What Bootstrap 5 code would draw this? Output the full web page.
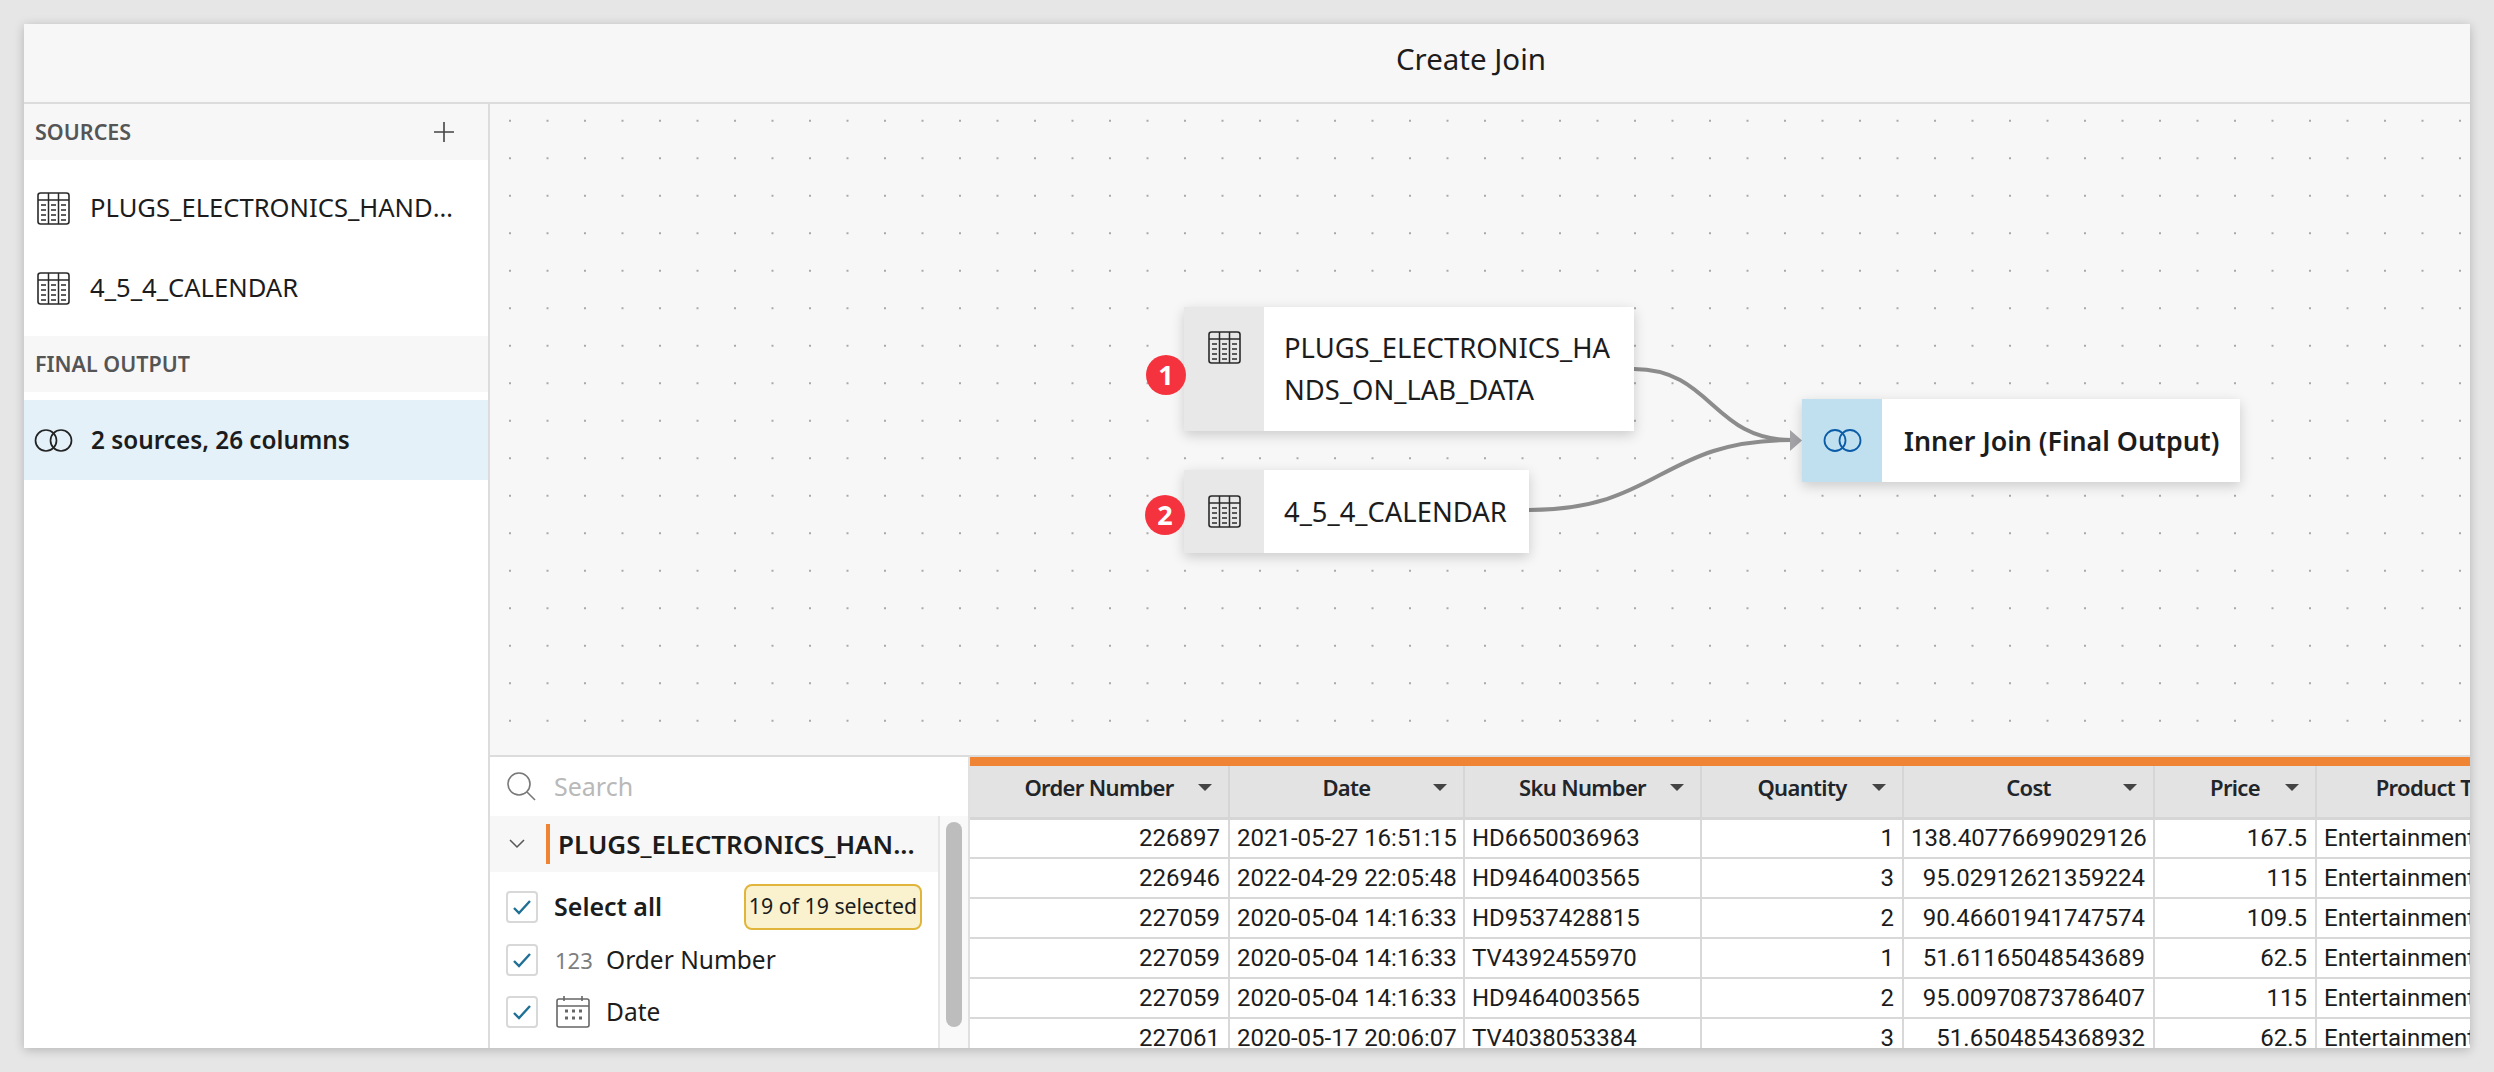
<!DOCTYPE html>
<html lang="en">
<head>
  <meta charset="UTF-8" />
  <title>Create Join</title>
  <link href="https://cdn.jsdelivr.net/npm/bootstrap@5.3.0/dist/css/bootstrap.min.css" rel="stylesheet" />
  <style>
    /* page + main panel */
    html, body { height: 100%; }
    body {
      background-color: #e6e6e6;
      color: #1c1c1c;
      font-family: "Noto Sans", sans-serif;
      font-size: 25px;
      padding: 24px 24px 0 24px;
      overflow: hidden;
    }
    .join-panel {
      width: 2446px;
      height: 1024px;
      background: #fff;
      box-shadow: 0 2px 10px rgba(0, 0, 0, .22);
      overflow: hidden;
    }
    .join-head {
      height: 80px;
      flex: none;
      background: #f7f7f7;
      border-bottom: 2px solid #dcdcdc;
      padding: 0 0 8px 448px;
      font-size: 29.5px;
    }
    .join-body { height: 944px; }

    /* left sidebar */
    .src-side { width: 466px; flex: none; border-right: 2px solid #dcdcdc; }
    .side-title {
      height: 56px;
      background: #f7f7f7;
      padding: 0 34px 0 11px;
      font-size: 21.5px;
      font-weight: 600;
      color: #555;
    }
    .side-list { padding: 8px 0; }
    .side-item { height: 80px; padding: 0 33px 0 13px; gap: 20px; white-space: nowrap; font-size: 25.6px; }
    .side-item.is-on { background: #e4f1f8; font-size: 24.3px; font-weight: 600; padding-left: 10px; gap: 18px; }
    .side-name { overflow: hidden; text-overflow: ellipsis; }
    .ico-table { width: 33px; height: 33px; flex: none; }
    .ico-join { width: 39px; height: 23px; flex: none; }

    /* canvas with the diagram */
    .join-main { width: 1980px; }
    .join-canvas {
      height: 651px;
      flex: none;
      position: relative;
      background-color: #f7f7f7;
      background-image: radial-gradient(circle, #a8a8a8 1px, transparent 1.4px);
      background-size: 37.5px 37.5px;
      background-position: 1.25px -2px;
    }
    .flow-lines { position: absolute; left: 0; top: 0; }
    .flow-node {
      position: absolute;
      display: flex;
      background: #fff;
      box-shadow: 0 4px 12px rgba(0, 0, 0, .18);
    }
    .node-ico { width: 80px; flex: none; background: #e8e8e8; display: flex; justify-content: center; }
    .node-ico.is-out { background: #c0e0ef; align-items: center; }
    .node-ico.is-mid { align-items: center; }
    .node-txt { padding: 0 10px 0 20px; line-height: 42px; align-self: center; font-size: 27.4px; white-space: nowrap; }
    .node-a { left: 694px; top: 203px; width: 450px; height: 124px; }
    .node-a .node-ico { padding-top: 24px; }
    .node-b { left: 694px; top: 366px; width: 345px; height: 83px; }
    .node-c { left: 1312px; top: 295px; width: 438px; height: 83px; }
    .node-c .node-txt { padding-left: 22px; font-size: 26.8px; font-weight: 600; }
    .step-dot {
      position: absolute;
      width: 40px;
      height: 40px;
      border-radius: 50%;
      background: #f5333f;
      color: #fff;
      font-weight: 700;
      font-size: 27px;
      line-height: 40px;
      text-align: center;
    }
    .dot-a { left: 656px; top: 251px; }
    .dot-b { left: 655px; top: 391px; }

    /* bottom: field picker + preview */
    .join-bottom { height: 293px; flex: none; border-top: 2px solid #dcdcdc; overflow: hidden; }
    .field-pick { width: 480px; flex: none; border-right: 2px solid #e0e0e0; }
    .field-search { height: 59px; padding-left: 17px; gap: 18px; color: #b9b9b9; }
    .field-box { height: 232px; overflow: hidden; }
    .field-scroll { flex: 1 1 auto; min-width: 0; }
    .field-track { width: 30px; flex: none; background: #f9f9f9; border-left: 2px solid #e6e6e6; padding: 6px 0 0 6px; }
    .field-thumb { width: 16px; height: 205px; border-radius: 8px; background: #bdbdbd; }
    .field-src { height: 56px; background: #f7f7f7; padding-left: 19px; white-space: nowrap; font-weight: 600; font-size: 26px; }
    .src-bar { width: 4px; height: 40px; background: #ef8434; margin: 0 8px 0 21px; flex: none; }
    .field-row { padding-left: 16px; height: 52px; white-space: nowrap; font-size: 24.5px; }
    .field-row.is-first { margin-top: 8px; height: 54px; font-size: 25px; }
    .tick-box {
      width: 32px;
      height: 32px;
      flex: none;
      border: 2px solid #d8d8d8;
      border-radius: 4px;
      margin-right: 16px;
      display: flex;
      align-items: center;
      justify-content: center;
    }
    .type-num { width: 52px; padding-left: 1px; color: #7d7d7d; font-size: 22px; }
    .type-cal { width: 52px; padding-left: 2px; display: flex; }
    .sel-pill {
      margin-left: auto;
      margin-right: 16px;
      height: 46px;
      width: 178px;
      border: 2px solid #e0b53a;
      border-radius: 8px;
      background: #faf2cf;
      font-size: 21.3px;
      text-align: center;
      line-height: 40px;
    }

    .data-wrap { flex: 1 1 auto; min-width: 0; overflow: hidden; border-top: 9px solid #ef8434; }
    .data-grid { width: 1598px; max-width: none; table-layout: fixed; margin: 0; font-family: Roboto, sans-serif; font-size: 24px; }
    .data-grid th {
      height: 52px;
      padding: 0 0 8px 0;
      position: relative;
      background: #e3e3e3;
      font-family: "Noto Sans", sans-serif;
      font-size: 22px;
      font-weight: 600;
      letter-spacing: -0.03em;
      text-align: center;
      vertical-align: middle;
      border-right: 2px solid #d6d6d6;
      border-bottom: 3px solid #d6d6d6;
    }
    .data-grid th::after {
      content: "";
      position: absolute;
      right: 16px;
      top: 18px;
      border-left: 7px solid transparent;
      border-right: 7px solid transparent;
      border-top: 7px solid #444;
    }
    .data-grid td {
      height: 40px;
      padding: 0 8px 0 7px;
      white-space: nowrap;
      border-right: 2px solid #d8d8d8;
      border-bottom: 2px solid #d8d8d8;
      vertical-align: middle;
      color: #1c1c1c;
    }
  </style>
</head>
<body>
  <!-- shared icons -->
  <svg width="0" height="0" class="position-absolute">
    <symbol id="i-table" viewBox="0 0 33 33">
      <rect x="1" y="1" width="31" height="31" rx="2.5" fill="none" stroke="#2a2a2a" stroke-width="1.6" />
      <path d="M1 8h31M11.5 1v31M21.5 1v31" fill="none" stroke="#2a2a2a" stroke-width="1.5" />
      <path d="M4 13h5M14 13h5M24 13h5M4 18h5M14 18h5M24 18h5M4 23h5M14 23h5M24 23h5M4 28h5M14 28h5M24 28h5" fill="none" stroke="#2a2a2a" stroke-width="1.5" />
    </symbol>
    <symbol id="i-tick" viewBox="0 0 20 16">
      <path d="M2 9l5 5L18 2" fill="none" stroke="#1f6f96" stroke-width="2.4" />
    </symbol>
  </svg>

  <div class="join-panel d-flex flex-column">
    <div class="join-head d-flex align-items-center justify-content-center">Create Join</div>

    <div class="join-body d-flex">
      <!-- Sources -->
      <div class="src-side">
        <div class="side-title d-flex align-items-center justify-content-between">
          <span>SOURCES</span>
          <svg width="20" height="20" viewBox="0 0 20 20"><path d="M10 0v20M0 10h20" stroke="#444" stroke-width="1.6" /></svg>
        </div>
        <div class="side-list">
          <div class="side-item d-flex align-items-center">
            <svg class="ico-table"><use href="#i-table" /></svg>
            <span class="side-name">PLUGS_ELECTRONICS_HANDS_ON_LAB_DATA</span>
          </div>
          <div class="side-item d-flex align-items-center">
            <svg class="ico-table"><use href="#i-table" /></svg>
            <span class="side-name">4_5_4_CALENDAR</span>
          </div>
        </div>
        <div class="side-title d-flex align-items-center">FINAL OUTPUT</div>
        <div class="side-list">
          <div class="side-item is-on d-flex align-items-center">
            <svg class="ico-join" viewBox="0 0 39 23"><circle cx="12" cy="11.5" r="10.5" fill="none" stroke="#222" stroke-width="1.7" /><circle cx="27" cy="11.5" r="10.5" fill="none" stroke="#222" stroke-width="1.7" /></svg>
            <span>2 sources, 26 columns</span>
          </div>
        </div>
      </div>

      <div class="join-main d-flex flex-column">
        <!-- Diagram -->
        <div class="join-canvas">
          <svg class="flow-lines" width="1980" height="651">
            <path d="M1144 265C1222 265 1222 336 1302 336" fill="none" stroke="#8c8c8c" stroke-width="4" />
            <path d="M1039 406C1170 406 1170 336 1302 336" fill="none" stroke="#8c8c8c" stroke-width="4" />
            <path d="M1300 326l12 10.500l-12 10.500z" fill="#a3a3a8" />
          </svg>
          <div class="flow-node node-a">
            <div class="node-ico"><svg class="ico-table"><use href="#i-table" /></svg></div>
            <div class="node-txt">PLUGS_ELECTRONICS_HA<br />NDS_ON_LAB_DATA</div>
          </div>
          <div class="flow-node node-b">
            <div class="node-ico is-mid"><svg class="ico-table"><use href="#i-table" /></svg></div>
            <div class="node-txt">4_5_4_CALENDAR</div>
          </div>
          <div class="flow-node node-c">
            <div class="node-ico is-out"><svg class="ico-join" viewBox="0 0 39 23"><circle cx="12" cy="11.5" r="10.500" fill="none" stroke="#0a5ca8" stroke-width="1.8" /><circle cx="27" cy="11.5" r="10.500" fill="none" stroke="#0a5ca8" stroke-width="1.8" /></svg></div>
            <div class="node-txt">Inner Join (Final Output)</div>
          </div>
          <div class="step-dot dot-a">1</div>
          <div class="step-dot dot-b">2</div>
        </div>

        <!-- Fields and preview -->
        <div class="join-bottom d-flex">
          <div class="field-pick">
            <div class="field-search d-flex align-items-center">
              <svg width="29" height="29" viewBox="0 0 29 29"><circle cx="12" cy="12" r="11" fill="none" stroke="#777" stroke-width="1.6" /><path d="M20 20l8 8" stroke="#777" stroke-width="1.6" /></svg>
              <span>Search</span>
            </div>
            <div class="field-box d-flex">
              <div class="field-scroll">
                <div class="field-src d-flex align-items-center">
                  <svg width="16" height="10" viewBox="0 0 16 10"><path d="M1 1l7 7 7-7" fill="none" stroke="#555" stroke-width="1.5" /></svg>
                  <span class="src-bar"></span>
                  <span>PLUGS_ELECTRONICS_HAN...</span>
                </div>
                <div class="field-row is-first d-flex align-items-center">
                  <span class="tick-box"><svg width="20" height="16"><use href="#i-tick" /></svg></span>
                  <b class="fw-semibold">Select all</b>
                  <span class="sel-pill">19 of 19 selected</span>
                </div>
                <div class="field-row d-flex align-items-center">
                  <span class="tick-box"><svg width="20" height="16"><use href="#i-tick" /></svg></span>
                  <span class="type-num">123</span>
                  <span>Order Number</span>
                </div>
                <div class="field-row d-flex align-items-center">
                  <span class="tick-box"><svg width="20" height="16"><use href="#i-tick" /></svg></span>
                  <span class="type-cal">
                    <svg width="34" height="32" viewBox="0 0 34 32"><rect x="1" y="3" width="32" height="28" rx="2" fill="none" stroke="#666" stroke-width="1.6" /><path d="M1 10h32M8 0v5M26 0v5" fill="none" stroke="#666" stroke-width="1.6" /><path d="M9 15h3M16 15h3M23 15h3M9 22h3M16 22h3M23 22h3" stroke="#666" stroke-width="3" /></svg>
                  </span>
                  <span>Date</span>
                </div>
              </div>
              <div class="field-track"><div class="field-thumb"></div></div>
            </div>
          </div>

          <div class="data-wrap">
            <table class="table data-grid">
              <colgroup id="grid-cols"></colgroup>
              <thead><tr id="grid-head"></tr></thead>
              <tbody id="grid-body"></tbody>
            </table>
          </div>
        </div>
      </div>
    </div>
  </div>

  <script>
    // preview table data
    const gridCols = [
      { name: "Order Number", width: 259, num: true },
      { name: "Date", width: 235 },
      { name: "Sku Number", width: 237 },
      { name: "Quantity", width: 202, num: true },
      { name: "Cost", width: 251, num: true },
      { name: "Price", width: 162, num: true },
      { name: "Product Type", width: 252 }
    ];
    const gridRows = [
      ["226897", "2021-05-27 16:51:15", "HD6650036963", "1", "138.40776699029126", "167.5", "Entertainment"],
      ["226946", "2022-04-29 22:05:48", "HD9464003565", "3", "95.02912621359224", "115", "Entertainment"],
      ["227059", "2020-05-04 14:16:33", "HD9537428815", "2", "90.46601941747574", "109.5", "Entertainment"],
      ["227059", "2020-05-04 14:16:33", "TV4392455970", "1", "51.61165048543689", "62.5", "Entertainment"],
      ["227059", "2020-05-04 14:16:33", "HD9464003565", "2", "95.00970873786407", "115", "Entertainment"],
      ["227061", "2020-05-17 20:06:07", "TV4038053384", "3", "51.6504854368932", "62.5", "Entertainment"]
    ];

    document.getElementById("grid-cols").innerHTML = gridCols
      .map(c => `<col style="width:${c.width}px">`).join("");
    document.getElementById("grid-head").innerHTML = gridCols
      .map(c => `<th>${c.name}</th>`).join("");
    document.getElementById("grid-body").innerHTML = gridRows
      .map(r => "<tr>" + r.map((v, i) =>
        `<td class="${gridCols[i].num ? "text-end" : ""}">${v}</td>`).join("") + "</tr>").join("");
  </script>
  <script src="https://cdn.jsdelivr.net/npm/bootstrap@5.3.0/dist/js/bootstrap.bundle.min.js"></script>
</body>
</html>
